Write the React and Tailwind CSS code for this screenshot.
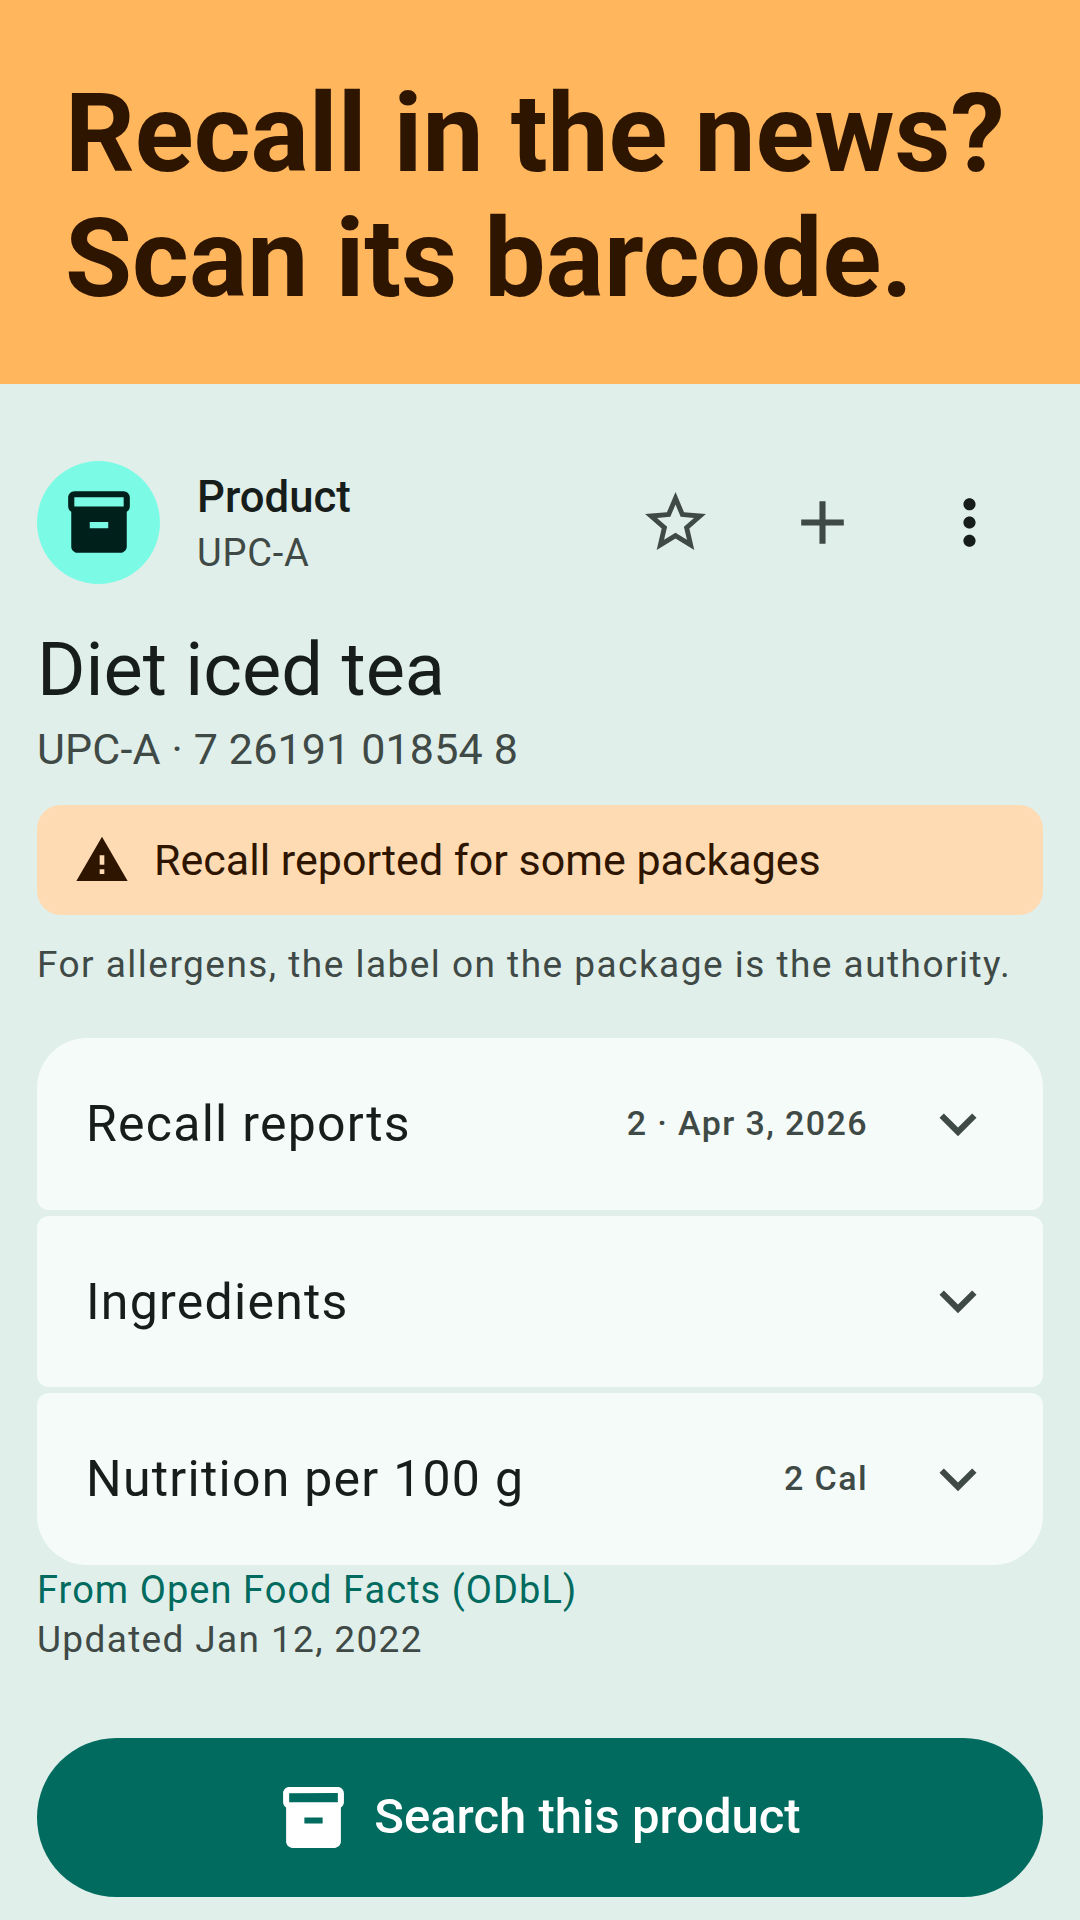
const archive = "M20 2H4c-1 0-2 .9-2 2v3.01c0 .72.43 1.34 1 1.69V20c0 1.1 1.1 2 2 2h14c.9 0 2-.9 2-2V8.7c.57-.35 1-.97 1-1.69V4c0-1.1-1-2-2-2zm-5 12H9v-2h6v2zm5-7H4V4l16-.02V7z";
const star = "M22 9.24l-7.19-.62L12 2 9.19 8.63 2 9.24l5.46 4.73L5.82 21 12 17.27 18.18 21l-1.63-7.03L22 9.24zM12 15.4l-3.76 2.27 1-4.28-3.32-2.88 4.38-.38L12 6.1l1.71 4.04 4.38.38-3.32 2.88 1 4.28L12 15.4z";
const plus = "M19 13h-6v6h-2v-6H5v-2h6V5h2v6h6v2z";
const dots = "M12 8c1.1 0 2-.9 2-2s-.9-2-2-2-2 .9-2 2 .9 2 2 2zm0 2c-1.1 0-2 .9-2 2s.9 2 2 2 2-.9 2-2-.9-2-2-2zm0 6c-1.1 0-2 .9-2 2s.9 2 2 2 2-.9 2-2-.9-2-2-2z";
const warning = "M1 21h22L12 2 1 21zm12-3h-2v-2h2v2zm0-4h-2v-4h2v4z";
const chevron = "M16.59 8.59L12 13.17 7.41 8.59 6 10l6 6 6-6z";

function Icon({ d, className }) {
    return (
        <svg viewBox="0 0 24 24" fill="currentColor" className={className}>
            <path d={d} />
        </svg>
    );
}

function Row({ title, meta, className }) {
    return (
        <div className={`flex h-[171.5px] items-center bg-[#f5fbf8] pl-[49px] pr-[48px] ${className}`}>
            <span className="flex-1 pt-[2px] text-[50px] tracking-[1.25px] text-[#171d1b]">{title}</span>
            {meta && <span className="mr-[53px] text-[34px] font-medium tracking-[1.4px] text-[#3f4946]">{meta}</span>}
            <Icon d={chevron} className="h-[74px] w-[74px] text-[#3f4946]" />
        </div>
    );
}

export default function App() {
    return (
        <div className="flex h-[1920px] w-[1080px] flex-col overflow-hidden bg-[#e0efea] font-['Roboto',sans-serif]">
            <div className="flex h-[384px] flex-col justify-center bg-[#ffb65c] pl-[65px] pt-[9px] text-[109px] font-bold leading-[125px] text-[#2e1500]">
                <div>Recall in the news?</div>
                <div>Scan its barcode.</div>
            </div>

            <div className="flex flex-1 flex-col px-[37px]">
                <div className="mt-[77px] flex h-[122px] items-center">
                    <div className="flex h-[123px] w-[123px] items-center justify-center rounded-full bg-[#7bfbe5]">
                        <Icon d={archive} className="h-[74px] w-[74px] text-[#00201b]" />
                    </div>
                    <div className="ml-[37px] flex-1 pt-[6px]">
                        <div className="text-[43.7px] font-medium leading-[56px] text-[#171d1b]">Product</div>
                        <div className="text-[38px] leading-[56px] tracking-[0.8px] text-[#3f4946]">UPC-A</div>
                    </div>
                    <Icon d={star} className="mr-[74px] h-[73px] w-[73px] text-[#3f4946]" />
                    <Icon d={plus} className="mr-[74px] h-[73px] w-[73px] text-[#3f4946]" />
                    <Icon d={dots} className="mr-[37px] h-[73px] w-[73px] text-[#171d1b]" />
                </div>

                <div className="mt-[43px] text-[74px] leading-[88px] text-[#171d1b]">Diet iced tea</div>
                <div className="mt-[5px] text-[43px] leading-[60px] tracking-[0.15px] text-[#3f4946]">UPC-A · 7 26191 01854 8</div>

                <div className="mt-[26px] flex h-[110px] items-center rounded-[24px] bg-[#ffdbb3] pl-[37px] text-[#2e1500]">
                    <Icon d={warning} className="h-[56px] w-[56px]" />
                    <span className="ml-[24px] text-[43px]">Recall reported for some packages</span>
                </div>

                <div className="mt-[25px] text-[37px] leading-[50px] tracking-[1.47px] text-[#3f4946]">
                    For allergens, the label on the package is the authority.
                </div>

                <div className="mt-[48px] flex flex-col gap-[6px]">
                    <Row title="Recall reports" meta="2 · Apr 3, 2026" className="rounded-t-[50px] rounded-b-[12px]" />
                    <Row title="Ingredients" className="rounded-[12px]" />
                    <Row title="Nutrition per 100 g" meta="2 Cal" className="rounded-t-[12px] rounded-b-[50px]" />
                </div>

                <div className="text-[38px] leading-[50px] tracking-[1.05px] text-[#006b5e]">From Open Food Facts (ODbL)</div>
                <div className="text-[37px] leading-[50px] tracking-[1.35px] text-[#3f4946]">Updated Jan 12, 2022</div>

                <div className="mt-[73px] flex h-[159px] items-center justify-center rounded-full bg-[#006b5e] pr-[2px] text-white">
                    <Icon d={archive} className="h-[73px] w-[73px]" />
                    <span className="ml-[24px] text-[49px] font-medium">Search this product</span>
                </div>
            </div>
        </div>
    );
}
